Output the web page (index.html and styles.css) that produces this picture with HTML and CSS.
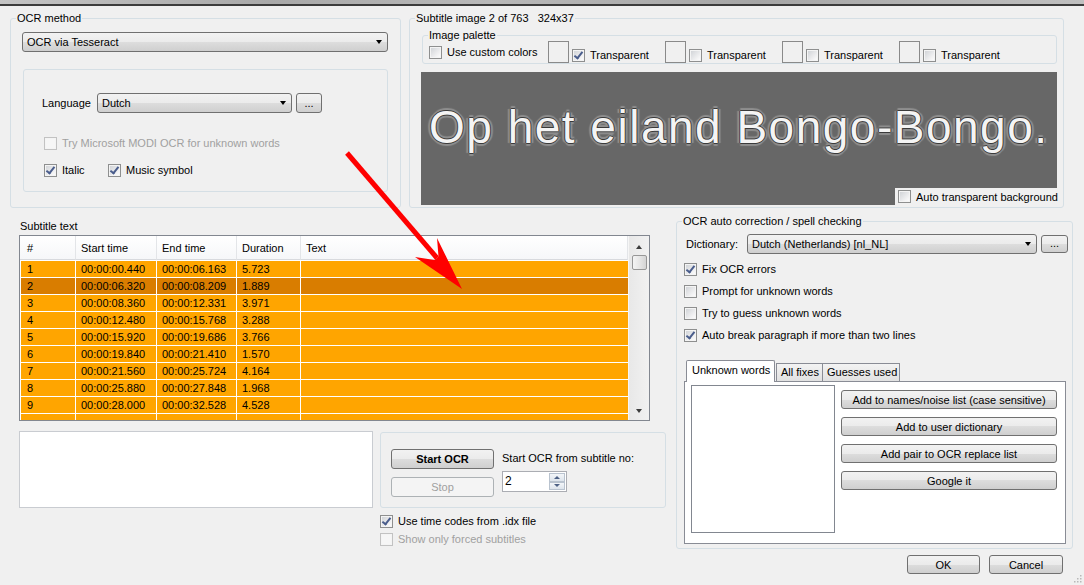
FILE: index.html
```html
<!DOCTYPE html>
<html lang="en">
<head>
  <meta charset="UTF-8" />
  <title>OCR - Subtitle image</title>
  <link rel="stylesheet" href="styles.css">
</head>
<body>
  <div class="titlebar"></div>

  <div class="window">
    <div class="top-row">
      <fieldset class="group ocr-method">
        <legend>OCR method</legend>
        <div class="method-body">
          <div class="combo method-combo"><span>OCR via Tesseract</span><i class="caret"></i></div>
          <div class="panel">
            <div class="lang-row">
              <span class="lang-label">Language</span>
              <div class="combo lang-combo"><span>Dutch</span><i class="caret"></i></div>
              <button class="btn dots">...</button>
            </div>
            <div class="check modi disabled"><span class="box"></span>Try Microsoft MODI OCR for unknown words</div>
            <div class="check-row">
              <div class="check italic"><span class="box on"></span>Italic</div>
              <div class="check"><span class="box on"></span>Music symbol</div>
            </div>
          </div>
        </div>
      </fieldset>

      <fieldset class="group sub-image">
        <legend>Subtitle image 2 of 763&nbsp;&nbsp;&nbsp;324x37</legend>
        <div class="image-body">
          <fieldset class="group palette">
            <legend>Image palette</legend>
            <div class="palette-row">
              <div class="check custom"><span class="box"></span>Use custom colors</div>
              <div class="swatch-item"><span class="swatch"></span><div class="check"><span class="box on"></span>Transparent</div></div>
              <div class="swatch-item"><span class="swatch"></span><div class="check"><span class="box"></span>Transparent</div></div>
              <div class="swatch-item"><span class="swatch"></span><div class="check"><span class="box"></span>Transparent</div></div>
              <div class="swatch-item"><span class="swatch"></span><div class="check"><span class="box"></span>Transparent</div></div>
            </div>
          </fieldset>
          <div class="preview">
            <div class="bongo">Op het eiland Bongo-Bongo.</div>
            <div class="check auto-bg"><span class="box"></span>Auto transparent background</div>
          </div>
        </div>
      </fieldset>
    </div>

    <div class="main-row">
      <div class="left-col">
        <div class="caption">Subtitle text</div>
        <div class="list">
          <div class="list-view">
            <table class="subs">
              <colgroup>
                <col style="width:56px"><col style="width:81px"><col style="width:80px"><col style="width:64px"><col>
              </colgroup>
              <thead>
                <tr><th>#</th><th>Start time</th><th>End time</th><th>Duration</th><th>Text</th></tr>
              </thead>
              <tbody>
                <tr><td>1</td><td>00:00:00.440</td><td>00:00:06.163</td><td>5.723</td><td></td></tr>
                <tr class="selected"><td>2</td><td>00:00:06.320</td><td>00:00:08.209</td><td>1.889</td><td></td></tr>
                <tr><td>3</td><td>00:00:08.360</td><td>00:00:12.331</td><td>3.971</td><td></td></tr>
                <tr><td>4</td><td>00:00:12.480</td><td>00:00:15.768</td><td>3.288</td><td></td></tr>
                <tr><td>5</td><td>00:00:15.920</td><td>00:00:19.686</td><td>3.766</td><td></td></tr>
                <tr><td>6</td><td>00:00:19.840</td><td>00:00:21.410</td><td>1.570</td><td></td></tr>
                <tr><td>7</td><td>00:00:21.560</td><td>00:00:25.724</td><td>4.164</td><td></td></tr>
                <tr><td>8</td><td>00:00:25.880</td><td>00:00:27.848</td><td>1.968</td><td></td></tr>
                <tr><td>9</td><td>00:00:28.000</td><td>00:00:32.528</td><td>4.528</td><td></td></tr>
                <tr><td></td><td></td><td></td><td></td><td></td></tr>
              </tbody>
            </table>
          </div>
          <div class="scrollbar">
            <i class="sb-up"></i>
            <div class="thumb"></div>
            <div class="sb-fill"></div>
            <i class="sb-down"></i>
          </div>
        </div>

        <div class="ocr-row">
          <div class="ocr-text"></div>
          <div class="ocr-box">
            <div class="ocr-buttons">
              <button class="btn start">Start OCR</button>
              <button class="btn off">Stop</button>
            </div>
            <div class="ocr-from">
              <div class="from-label">Start OCR from subtitle no:</div>
              <div class="spinner">
                <span class="spin-value">2</span>
                <div class="spin-btns"><i class="spin-up"></i><i class="spin-down"></i></div>
              </div>
            </div>
          </div>
        </div>

        <div class="idx-checks">
          <div class="check line"><span class="box on"></span>Use time codes from .idx file</div>
          <div class="check line disabled"><span class="box"></span>Show only forced subtitles</div>
        </div>
      </div>

      <div class="right-col">
        <fieldset class="group spell">
          <legend>OCR auto correction / spell checking</legend>
          <div class="spell-body">
            <div class="dict-row">
              <span class="dict-label">Dictionary:</span>
              <div class="combo dict-combo"><span>Dutch (Netherlands) [nl_NL]</span><i class="caret"></i></div>
              <button class="btn dots dict-dots">...</button>
            </div>
            <div class="spell-checks">
              <div class="check opt"><span class="box on"></span>Fix OCR errors</div>
              <div class="check opt"><span class="box"></span>Prompt for unknown words</div>
              <div class="check opt"><span class="box"></span>Try to guess unknown words</div>
              <div class="check opt"><span class="box on"></span>Auto break paragraph if more than two lines</div>
            </div>
            <div class="tabs">
              <div class="tab active">Unknown words</div>
              <div class="tab fixes">All fixes</div>
              <div class="tab guesses">Guesses used</div>
            </div>
            <div class="tab-panel">
              <div class="word-list"></div>
              <div class="word-actions">
                <button class="btn action">Add to names/noise list (case sensitive)</button>
                <button class="btn action">Add to user dictionary</button>
                <button class="btn action">Add pair to OCR replace list</button>
                <button class="btn action">Google it</button>
              </div>
            </div>
          </div>
        </fieldset>

        <div class="footer">
          <button class="btn ok">OK</button>
          <button class="btn cancel">Cancel</button>
        </div>
      </div>
    </div>
  </div>

  <!-- annotation drawn over the dialog -->
  <svg class="arrow" width="1084" height="585" viewBox="0 0 1084 585">
    <line x1="347" y1="153" x2="437" y2="258" stroke="#ff0000" stroke-width="5" />
    <polygon points="462,289 415,257 434.5,260 438.5,256.5 437,238" fill="#ff0000" />
  </svg>

  <svg class="grip" width="10" height="10" viewBox="0 0 10 10">
    <g fill="#b8b8b8">
      <rect x="8" y="2" width="1.5" height="1.5" />
      <rect x="5" y="5" width="1.5" height="1.5" /><rect x="8" y="5" width="1.5" height="1.5" />
      <rect x="2" y="8" width="1.5" height="1.5" /><rect x="5" y="8" width="1.5" height="1.5" /><rect x="8" y="8" width="1.5" height="1.5" />
    </g>
  </svg>
</body>
</html>
```

FILE: styles.css
```css
:root {
  --bg: #f0f0f0;
  --group: #d5dfe5;
  --btn-border: #707070;
  --list-border: #828790;
  --orange: #ffa500;
  --orange-sel: #d97d00;
  --disabled: #a0a0a0;
}

* {
  box-sizing: border-box;
}

body {
  margin: 0;
  width: 1084px;
  height: 585px;
  overflow: hidden;
  position: relative;
  background-color: var(--bg);
  font-family: "Liberation Sans", Arial, sans-serif;
  font-size: 11px;
  line-height: 14px;
  color: #000;
}

.titlebar {
  height: 6px;
  background: linear-gradient(90deg, #c4c4c4, #a9a9a9 25%, #b9b9b9 45%, #a6a6a6 70%, #c0c0c0);
  border-bottom: 2px solid #3c3c3c;
}

.window {
  padding-top: 5px;
}

/* group boxes */
.group {
  margin: 0;
  padding: 0;
  min-width: 0;
  border: 1px solid var(--group);
  border-radius: 3px;
}

.group legend {
  margin-left: 5px;
  padding: 0 1px;
  line-height: 14px;
}

.top-row {
  display: flex;
  gap: 8px;
  padding-left: 10px;
}

.ocr-method {
  width: 391px;
}

.method-body {
  padding: 7px 12px 15px 11px;
}

/* combos and buttons */
.combo {
  display: flex;
  align-items: center;
  justify-content: space-between;
  height: 20px;
  padding: 0 5px 0 4px;
  border: 1px solid var(--btn-border);
  border-radius: 3px;
  background: linear-gradient(#f2f2f2, #ebebeb 50%, #dddddd 50%, #cfcfcf);
}

.caret {
  width: 0;
  height: 0;
  border-left: 3.5px solid transparent;
  border-right: 3.5px solid transparent;
  border-top: 4px solid #000;
}

.btn {
  display: flex;
  align-items: center;
  justify-content: center;
  padding: 0;
  border: 1px solid var(--btn-border);
  border-radius: 3px;
  background: linear-gradient(#f2f2f2, #ebebeb 50%, #dddddd 50%, #cfcfcf);
  font-family: inherit;
  font-size: 11px;
  color: #000;
}

.btn.off {
  border-color: #adb2b5;
  background: #f4f4f4;
  color: var(--disabled);
}

.dots {
  width: 26px;
  height: 20px;
  margin-left: 4px;
  align-items: flex-end;
  padding-bottom: 3px;
}

.panel {
  height: 123px;
  margin: 17px 0 0 1px;
  padding: 23px 0 0 18px;
  border: 1px solid var(--group);
  border-radius: 3px;
}

.lang-row {
  display: flex;
  align-items: center;
}

.lang-label {
  width: 55px;
}

.lang-combo {
  width: 195px;
}

/* checkboxes */
.check {
  display: flex;
  align-items: center;
  height: 16px;
  white-space: nowrap;
}

.box {
  flex: none;
  display: flex;
  align-items: center;
  justify-content: center;
  width: 13px;
  height: 13px;
  margin-right: 5px;
  border: 1px solid #8e8f8f;
  box-shadow: inset 0 0 0 1px #f4f4f4;
  background: linear-gradient(135deg, #cdd0d4, #f2f2f3 70%, #fff);
}

.box.on::after {
  content: "";
  width: 3px;
  height: 7px;
  margin-top: -2px;
  border: solid #4a5d8c;
  border-width: 0 2px 2px 0;
  transform: rotate(38deg);
}

.check.disabled {
  color: var(--disabled);
}

.check.disabled .box {
  border-color: #c2c2c2;
  background: #f6f6f6;
}

.modi {
  margin: 22px 0 0 2px;
}

.check-row {
  display: flex;
  margin: 11px 0 0 2px;
}

.italic {
  width: 64px;
}

/* subtitle image */
.sub-image {
  width: 655px;
}

.image-body {
  padding: 3px 0 2px 11px;
}

.group.palette {
  width: 635px;
  margin-left: 1px;
}

.palette-row {
  display: flex;
  align-items: center;
  height: 22px;
  margin-top: -1px;
  padding-left: 6px;
}

.custom {
  width: 119px;
}

.swatch-item {
  display: flex;
  align-items: center;
  width: 117px;
}

.swatch-item .check {
  margin-top: 6px;
}

.swatch {
  width: 21px;
  height: 22px;
  margin-right: 3px;
  border: 1px solid #8a8a8a;
}

.preview {
  display: flex;
  flex-direction: column;
  width: 636px;
  height: 133px;
  margin-top: 8px;
  background-color: #676767;
}

.bongo {
  padding: 29px 0 0 8px;
  font-size: 46px;
  line-height: 52px;
  letter-spacing: 1.5px;
  white-space: nowrap;
  color: #f4f4f4;
  text-shadow: 1px 0 0 #3a3a3a, -1px 0 0 #3a3a3a, 0 1px 0 #3a3a3a, 0 -1px 0 #3a3a3a,
    3px 0 1px #8f8f8f, -3px 0 1px #8f8f8f, 0 3px 1px #8f8f8f, 0 -3px 1px #8f8f8f;
}

.auto-bg {
  align-self: flex-end;
  width: 162px;
  height: 17px;
  margin-top: auto;
  padding-left: 3px;
  background-color: var(--bg);
}

/* lower part */
.main-row {
  display: flex;
  gap: 10px;
  padding-left: 19px;
}

.left-col {
  width: 647px;
}

.caption {
  margin: 11px 0 2px 1px;
}

.list {
  display: flex;
  width: 631px;
  height: 186px;
  border: 1px solid var(--list-border);
  background: #fff;
}

.list-view {
  width: 608px;
  overflow: hidden;
}

.subs {
  width: 608px;
  table-layout: fixed;
  border-collapse: separate;
  border-spacing: 0;
}

.subs th {
  height: 24px;
  padding: 0 0 0 5px;
  text-align: left;
  font-weight: normal;
  background: linear-gradient(#ffffff, #f6f7f9);
  border-right: 1px solid #e3e5e8;
  border-bottom: 1px solid #d8dade;
}

.subs th:first-child {
  padding-left: 7px;
}

.subs td {
  height: 17px;
  padding: 0 0 0 5px;
  line-height: 16px;
  white-space: nowrap;
  background-color: var(--orange);
  border-right: 1px solid #fff;
  border-bottom: 1px solid #fff;
}

.subs td:first-child {
  border-left: 1px solid #fff;
  padding-left: 6px;
}

.subs td:last-child {
  border-right: none;
}

.subs tbody tr:first-child td {
  height: 18px;
  border-top: 1px solid #fff;
}

.subs tr.selected td {
  background-color: var(--orange-sel);
}

.scrollbar {
  display: flex;
  flex-direction: column;
  align-items: center;
  width: 21px;
  padding: 9px 0 7px;
  background: linear-gradient(90deg, #e8e8e8, #f1f1f1);
  border-left: 1px solid #f6f6f6;
}

.sb-up,
.sb-down {
  width: 0;
  height: 0;
  border-left: 3.5px solid transparent;
  border-right: 3.5px solid transparent;
}

.sb-up {
  border-bottom: 4px solid #3c3c3c;
}

.sb-down {
  border-top: 4px solid #3c3c3c;
}

.thumb {
  width: 15px;
  height: 15px;
  margin-top: 6px;
  border: 1px solid #979797;
  border-radius: 2px;
  background: linear-gradient(90deg, #f4f4f4, #e6e6e6 50%, #d4d4d4);
}

.sb-fill {
  flex: 1;
}

.ocr-row {
  display: flex;
  margin-top: 10px;
}

.ocr-text {
  width: 354px;
  height: 77px;
  border: 1px solid #c9ccd1;
  background: #fff;
}

.ocr-box {
  display: flex;
  gap: 8px;
  width: 286px;
  height: 76px;
  margin: 1px 0 0 7px;
  padding: 16px 0 0 10px;
  border: 1px solid var(--group);
  border-radius: 3px;
}

.ocr-buttons {
  display: flex;
  flex-direction: column;
  gap: 8px;
}

.ocr-buttons .btn {
  width: 103px;
  height: 20px;
}

.start {
  font-weight: bold;
}

.from-label {
  margin-top: 2px;
}

.spinner {
  display: flex;
  width: 65px;
  height: 21px;
  margin-top: 6px;
  border: 1px solid #abadb3;
  background: #fff;
}

.spin-value {
  flex: 1;
  padding-left: 2px;
  font-size: 12px;
  line-height: 18px;
}

.spin-btns {
  display: flex;
  flex-direction: column;
  width: 16px;
  margin: 1px;
}

.spin-up,
.spin-down {
  flex: 1;
  display: flex;
  align-items: center;
  justify-content: center;
  border: 1px solid #b9c3cf;
  background: linear-gradient(#f3f6f9, #dde4ec);
}

.spin-up::after,
.spin-down::after {
  content: "";
  border-left: 3px solid transparent;
  border-right: 3px solid transparent;
}

.spin-up::after {
  border-bottom: 3px solid #4d6185;
}

.spin-down::after {
  border-top: 3px solid #4d6185;
}

.idx-checks {
  margin: 4px 0 0 361px;
}

.check.line {
  height: 18px;
}

/* spell checking */
.right-col {
  width: 397px;
}

.group.spell {
  width: 397px;
  margin-top: 6px;
}

.spell-body {
  padding: 6px 4px 4px 7px;
}

.dict-row {
  display: flex;
  align-items: center;
  margin-left: 2px;
}

.dict-label {
  width: 61px;
}

.dict-combo {
  width: 290px;
}

.dict-dots {
  width: 27px;
  height: 18px;
}

.spell-checks {
  margin-top: 4px;
}

.check.opt {
  height: 22px;
}

.tabs {
  display: flex;
  align-items: flex-end;
  margin: 14px 0 0 2px;
}

.tab {
  height: 18px;
  padding: 0 0 0 4px;
  line-height: 17px;
  white-space: nowrap;
  border: 1px solid #898c95;
  border-bottom: none;
  background: linear-gradient(#f3f3f3, #e1e1e1);
}

.tab.active {
  position: relative;
  width: 89px;
  height: 22px;
  margin-bottom: -1px;
  padding-left: 5px;
  line-height: 19px;
  background: #fff;
  border-radius: 2px 2px 0 0;
}

.tab.fixes {
  width: 47px;
  margin-left: 1px;
}

.tab.guesses {
  width: 77px;
  border-left: none;
}

.tab-panel {
  display: flex;
  width: 382px;
  height: 163px;
  padding: 3px 0 0 6px;
  border: 1px solid #898c95;
  background: #fff;
}

.word-list {
  width: 144px;
  height: 148px;
  border: 1px solid var(--list-border);
}

.word-actions {
  display: flex;
  flex-direction: column;
  gap: 8px;
  margin: 5px 0 0 6px;
}

.action {
  width: 216px;
  height: 19px;
}

.footer {
  display: flex;
  justify-content: flex-end;
  gap: 9px;
  margin-top: 6px;
  padding-right: 10px;
}

.footer .btn {
  height: 19px;
}

.ok {
  width: 73px;
}

.cancel {
  width: 74px;
}

.arrow {
  position: absolute;
  left: 0;
  top: 0;
  pointer-events: none;
}

.grip {
  position: absolute;
  right: 2px;
  bottom: 2px;
}
```
